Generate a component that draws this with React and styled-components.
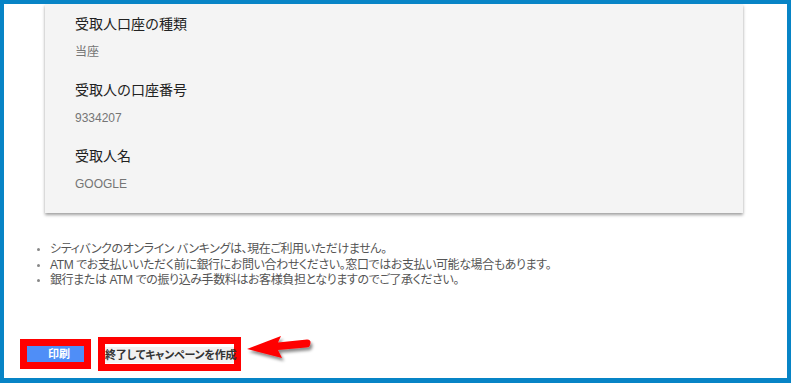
import styled, { createGlobalStyle } from 'styled-components';

const GlobalStyle = createGlobalStyle`
  html, body {
    margin: 0;
    padding: 0;
    background: #ffffff;
  }
  body {
    font-family: "Liberation Sans", "Noto Sans CJK JP", sans-serif;
  }
`;

const Frame = styled.div`
  box-sizing: border-box;
  width: 791px;
  height: 383px;
  border: 4px solid #0784c6;
  border-bottom-width: 5px;
  display: flex;
  flex-direction: column;
  overflow: hidden;
  background: #fff;
`;

const Card = styled.div`
  margin: 0 44px 0 41px;
  padding: 10px 30px 21px;
  background: #f4f4f4;
  box-shadow: 0 2px 3px rgba(0, 0, 0, 0.38);
  display: flex;
  flex-direction: column;
  gap: 20px;
`;

const Field = styled.div`
  display: flex;
  flex-direction: column;
  gap: 10px;
`;

const Label = styled.div`
  font-size: 14px;
  line-height: 20px;
  color: #212121;
`;

const Value = styled.div`
  font-size: 12px;
  line-height: 16px;
  color: #757575;
`;

const Notes = styled.ul`
  margin: 29px 0 0;
  padding: 0 0 0 46px;
  font-size: 12px;
  line-height: 15.5px;
  color: #555;
  font-feature-settings: "palt";
  letter-spacing: -0.4px;

  li::marker {
    color: #888;
    font-size: 10px;
  }
`;

const Actions = styled.div`
  margin-top: 48px;
  padding-left: 16px;
  display: flex;
  align-items: center;
  gap: 7px;
`;

const Highlight = styled.div`
  border: 7px solid #ff0000;
  display: flex;
`;

const Button = styled.button`
  border: none;
  margin: 0;
  height: 16px;
  width: ${({ $primary }) => ($primary ? '57px' : '129px')};
  padding: ${({ $primary }) => ($primary ? '0 0 0 7px' : '0')};
  background: ${({ $primary }) => ($primary ? '#4f8ef7' : '#f1f1f1')};
  color: ${({ $primary }) => ($primary ? '#ffffff' : '#333333')};
  font-family: "Liberation Sans", "Noto Sans CJK JP", sans-serif;
  font-size: 11px;
  font-weight: 700;
  line-height: 16px;
  font-feature-settings: "palt";
  letter-spacing: ${({ $primary }) => ($primary ? '0' : '-0.2px')};
  white-space: nowrap;
  box-sizing: border-box;
`;

const SecondaryWrap = styled(Highlight)`
  padding: 3px 0 1px;
`;

const Arrow = () => (
  <svg width="72" height="30" viewBox="0 0 72 30" style={{ marginLeft: -2, marginTop: -10 }}>
    <defs>
      <filter id="arrowShadow" x="-20%" y="-30%" width="140%" height="170%">
        <feDropShadow dx="2" dy="3" stdDeviation="1.4" floodColor="#000" floodOpacity="0.45" />
      </filter>
    </defs>
    <path
      d="M1 15 L35 2 L32 8.5 L61 5.5 Q65 5.5 64.5 9 L64 11 Q63.5 13.5 60 13.5 L32 16 L36 24 Z"
      fill="#ff0000"
      filter="url(#arrowShadow)"
    />
  </svg>
);

const fields = [
  { label: '受取人口座の種類', value: '当座' },
  { label: '受取人の口座番号', value: '9334207' },
  { label: '受取人名', value: 'GOOGLE' },
];

const notes = [
  'シティバンクのオンライン バンキングは、現在ご利用いただけません。',
  'ATM でお支払いいただく前に銀行にお問い合わせください。窓口ではお支払い可能な場合もあります。',
  '銀行または ATM での振り込み手数料はお客様負担となりますのでご了承ください。',
];

export default function App() {
  return (
    <>
      <GlobalStyle />
      <Frame>
        <Card>
          {fields.map((f) => (
            <Field key={f.label}>
              <Label>{f.label}</Label>
              <Value>{f.value}</Value>
            </Field>
          ))}
        </Card>
        <Notes>
          {notes.map((n) => (
            <li key={n}>{n}</li>
          ))}
        </Notes>
        <Actions>
          <Highlight>
            <Button $primary>印刷</Button>
          </Highlight>
          <SecondaryWrap>
            <Button>終了してキャンペーンを作成</Button>
          </SecondaryWrap>
          <Arrow />
        </Actions>
      </Frame>
    </>
  );
}
